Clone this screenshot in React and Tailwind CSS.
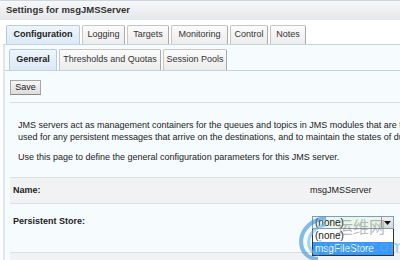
import React from 'react';

const font = { fontFamily: '"Liberation Sans", Arial, sans-serif' };

const Tab = ({ label, w, active, h = 'h-[19px]' }) => (
    <div
        className={`${h} ${w} flex items-center justify-center rounded-t-[2px] border border-b-0 ${
            active
                ? 'bg-gradient-to-b from-[#eef5fb] to-[#dce9f5] border-[#b9cadb] font-bold text-[#222]'
                : 'bg-gradient-to-b from-[#fbfbfb] to-[#ececec] border-[#c6c6c6] border-r-[#a9a9a9] text-[#333]'
        }`}
    >
        {label}
    </div>
);

export default function App() {
    return (
        <div className="relative w-[400px] h-[260px] overflow-hidden bg-white text-[9px] text-[#222]" style={font}>
            <div className="h-[20px] border-t border-[#cdd6de] bg-gradient-to-b from-[#f7f8f9] to-[#e4e7e9] flex items-center pl-[6px] font-bold text-[9.5px] text-[#333]">
                Settings for msgJMSServer
            </div>
            <div className="flex gap-[2px] pl-[6px] pt-[5px]">
                <Tab label="Configuration" w="w-[74px]" active />
                <Tab label="Logging" w="w-[43px]" />
                <Tab label="Targets" w="w-[42px]" />
                <Tab label="Monitoring" w="w-[57px]" />
                <Tab label="Control" w="w-[38px]" />
                <Tab label="Notes" w="w-[36px]" />
            </div>
            <div className="ml-[3px] border-l-2 border-t border-l-[#dfe5ea] border-t-[#c3d3e2] bg-[#f6fbfe] h-[220px]">
                <div className="flex gap-[2px] pl-[4px] pt-[4px] border-b border-[#c3d3e2]">
                    <Tab label="General" w="w-[48px]" h="h-[21px]" active />
                    <Tab label="Thresholds and Quotas" w="w-[102px]" h="h-[21px]" />
                    <Tab label="Session Pools" w="w-[64px]" h="h-[21px]" />
                </div>
                <div className="pl-[5px]">
                    <div className="pt-[9px] pb-[7px] border-b border-[#dcdfe2]">
                        <button className="h-[15px] w-[31px] bg-gradient-to-b from-[#f6f6f6] to-[#dcdcdc] border border-[#a6a6a6] border-b-[#8a8a8a] text-[9px] text-[#222] leading-none">
                            Save
                        </button>
                    </div>
                    <div className="pl-[8px] pt-[16px] pb-[14px] leading-[12px] whitespace-nowrap">
                        <p>JMS servers act as management containers for the queues and topics in JMS modules that are targeted to them.</p>
                        <p>used for any persistent messages that arrive on the destinations, and to maintain the states of durable subscribers.</p>
                        <p className="mt-[8px]">Use this page to define the general configuration parameters for this JMS server.</p>
                    </div>
                    <div className="h-[27px] flex items-center border-t border-b border-[#dcdfe2] bg-[#f1f2f3]">
                        <div className="w-[300px] pl-[3px] font-bold">Name:</div>
                        <div>msgJMSServer</div>
                    </div>
                    <div className="h-[49px] flex border-b border-[#dcdfe2]">
                        <div className="w-[300px] pl-[3px] pt-[11px] font-bold">Persistent Store:</div>
                        <div className="pt-[12px] pl-[2px]">
                            <div className="w-[82px] h-[13px] flex border border-[#7f9db9] bg-[#e9f6ea]">
                                <div className="flex-1 pl-[2px] leading-[11px] text-[10px]">(none)</div>
                                <div className="w-[12px] h-full bg-gradient-to-b from-[#f2f2f2] to-[#d6d6d6] border-l border-[#9a9a9a] flex items-center justify-center">
                                    <svg width="7" height="4" viewBox="0 0 7 4"><path d="M0 0h7L3.5 4z" fill="#111" /></svg>
                                </div>
                            </div>
                            <div className="w-[82px] border border-t-0 border-[#333] bg-white text-[10px]">
                                <div className="h-[13px] pl-[2px] leading-[13px]">(none)</div>
                                <div className="h-[13px] pl-[2px] leading-[13px] bg-[#3399ff] text-white">msgFileStore</div>
                            </div>
                        </div>
                    </div>
                    <div className="h-[20px] bg-[#f1f2f3]" />
                </div>
            </div>
            <div className="absolute left-[296px] top-[214px] pointer-events-none opacity-60">
                <svg width="40" height="46" viewBox="0 0 40 46">
                    <path d="M30 4 C12 6 2 20 6 34 C9 42 16 45 22 45" stroke="#3a8fd8" strokeWidth="4" fill="none" />
                    <path d="M30 11 C18 13 11 22 13 32 C15 38 19 40 23 40" stroke="#6fb4ea" strokeWidth="3" fill="none" />
                </svg>
            </div>
            <div className="absolute left-[337px] top-[214px] text-[16px] text-[#7a7a7a] opacity-50 pointer-events-none" style={{ fontFamily: '"Noto Sans CJK SC", sans-serif' }}>
                运维网
            </div>
            <div className="absolute left-[318px] top-[235px] text-[16px] font-bold text-[#6aa6d8] opacity-50 pointer-events-none tracking-[1px]">
                iyunv.com
            </div>
        </div>
    );
}
